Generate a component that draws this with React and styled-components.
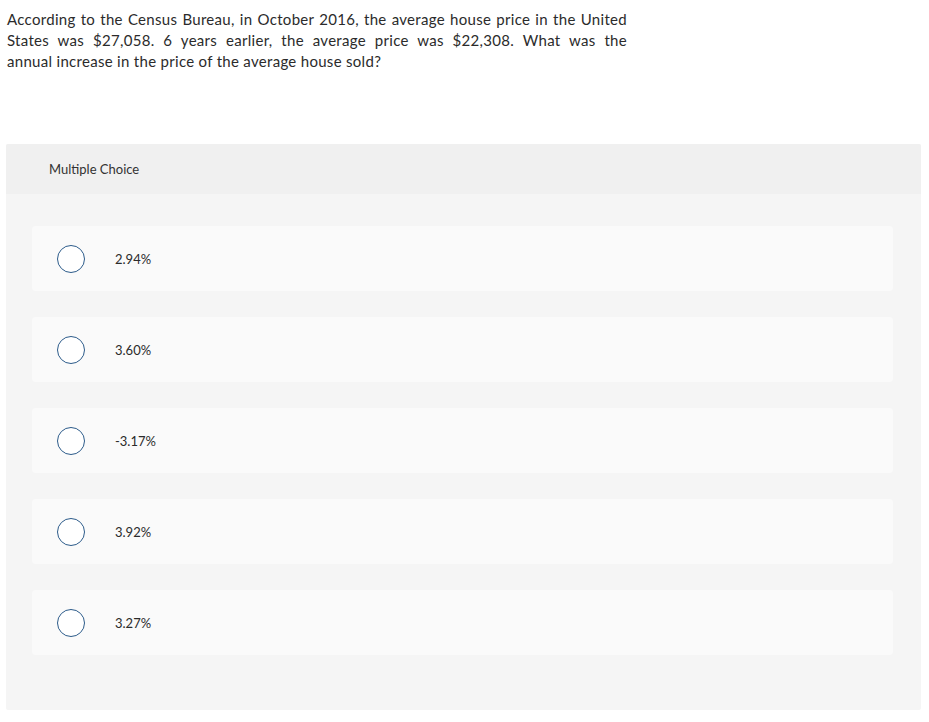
import styled, { createGlobalStyle } from 'styled-components';

const GlobalStyle = createGlobalStyle`
    body {
        margin: 0;
        background: #ffffff;
        font-family: Lato, "Open Sans", sans-serif;
        color: #333333;
    }
`;

const Page = styled.div`
    padding: 9px 8px 0 6px;
`;

const Question = styled.p`
    margin: 0;
    width: 620px;
    font-size: 15px;
    line-height: 21px;
    letter-spacing: 0.3px;
    color: #2b2b2b;
    padding-left: 1px;
`;

// each wrapped line of the question, stretched like the original justified paragraph
const Line = styled.span`
    display: block;
    white-space: nowrap;
    text-align: ${(p) => (p.$last ? 'left' : 'justify')};
    text-align-last: ${(p) => (p.$last ? 'left' : 'justify')};
`;

const Panel = styled.section`
    margin-top: 72px;
    width: 915px;
    background: #f5f5f5;
    border-radius: 2px;
    overflow: hidden;
`;

const Header = styled.div`
    height: 50px;
    display: flex;
    align-items: center;
    padding-left: 43px;
    background: #f0f0f0;
    font-size: 13px;
    color: #333333;
`;

const Options = styled.div`
    display: flex;
    flex-direction: column;
    gap: 26px;
    padding: 32px 28px 55px 26px;
`;

const Option = styled.label`
    height: 65px;
    display: flex;
    align-items: center;
    gap: 30px;
    padding-left: 25px;
    background: #fafafa;
    border-radius: 4px;
    font-size: 13px;
    color: #2b2b2b;
    cursor: pointer;
`;

const Radio = styled.span`
    width: 28px;
    height: 28px;
    box-sizing: border-box;
    border: 1.5px solid #2c5b8a;
    border-radius: 50%;
    background: #ffffff;
    flex-shrink: 0;
`;

const choices = ['2.94%', '3.60%', '-3.17%', '3.92%', '3.27%'];

export default function App() {
    return (
        <Page>
            <GlobalStyle />
            <Question>
                <Line>According to the Census Bureau, in October 2016, the average house price in the United</Line>
                <Line>States was $27,058. 6 years earlier, the average price was $22,308. What was the</Line>
                <Line $last>annual increase in the price of the average house sold?</Line>
            </Question>
            <Panel>
                <Header>Multiple Choice</Header>
                <Options>
                    {choices.map((c) => (
                        <Option key={c}>
                            <Radio />
                            <span>{c}</span>
                        </Option>
                    ))}
                </Options>
            </Panel>
        </Page>
    );
}
